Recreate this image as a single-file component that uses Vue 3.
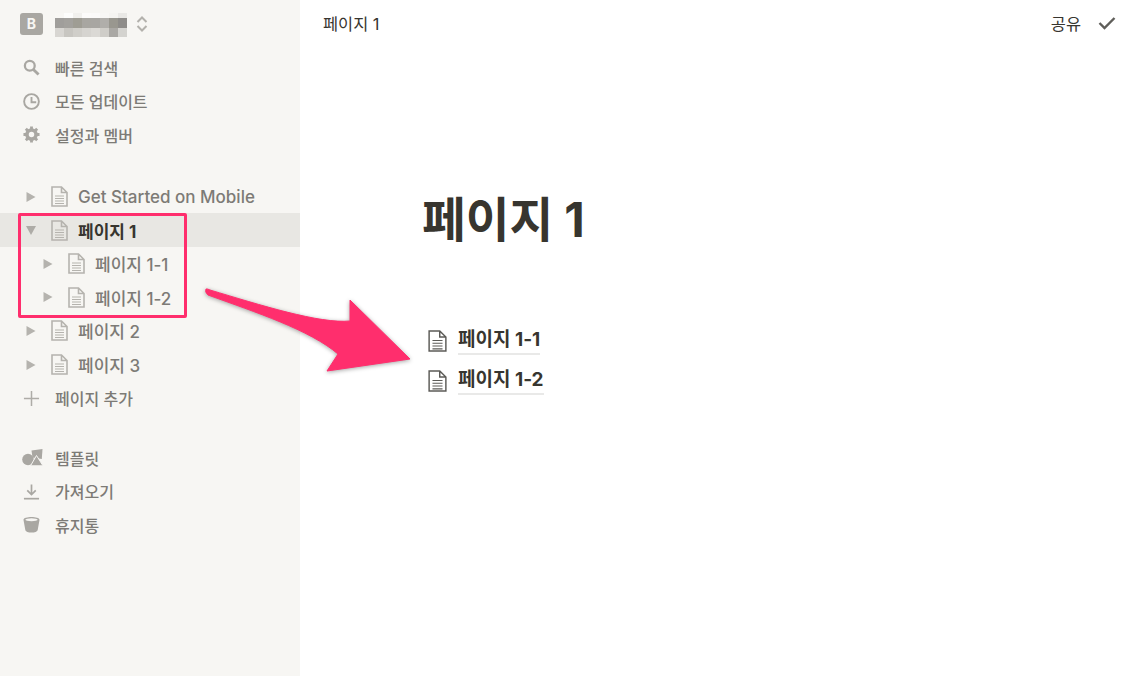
<script setup>
const blurRows = [
  ['#f8f7f4', '#fdfdfc', '#f1f0ed', '#fcfbfa', '#fbfaf9', '#f8f7f5', '#f5f4f1', '#e9e8e5'],
  ['#a09e9b', '#a3a19d', '#9f9d94', '#a8a6a1', '#a8a6a2', '#b0aeaa', '#99978f', '#8e8c89'],
  ['#d8d6d2', '#c8c6c1', '#d0cec9', '#d6d4d0', '#dbd9d5', '#cfcdc8', '#aaa8a4', '#d4d3cf']
]

const navTop = [
  { label: '빠른 검색', icon: 'search' },
  { label: '모든 업데이트', icon: 'clock' },
  { label: '설정과 멤버', icon: 'gear' }
]

const pages = [
  { label: 'Get Started on Mobile' },
  { label: '페이지 1', open: true, active: true },
  { label: '페이지 1-1', sub: true },
  { label: '페이지 1-2', sub: true },
  { label: '페이지 2' },
  { label: '페이지 3' }
]

const navBottom = [
  { label: '템플릿', icon: 'shapes' },
  { label: '가져오기', icon: 'import' },
  { label: '휴지통', icon: 'trash' }
]

const children = ['페이지 1-1', '페이지 1-2']
</script>

<template>
  <div class="app">
    <aside class="sidebar">
      <div class="workspace">
        <span class="badge">B</span>
        <div class="blur">
          <div class="blur-row" v-for="(row, r) in blurRows" :key="r">
            <i v-for="(c, i) in row" :key="i" :style="{ background: c }"></i>
          </div>
        </div>
        <svg class="updown" width="12" height="16" viewBox="0 0 12 16">
          <path d="M1.5 6 L6 1.5 L10.5 6 M1.5 10 L6 14.5 L10.5 10" fill="none" stroke="#b3b1ac" stroke-width="2" />
        </svg>
      </div>

      <div class="group">
        <div class="row nav" v-for="item in navTop" :key="item.label">
          <svg class="nav-icon" width="18" height="18" viewBox="0 0 18 18">
            <g v-if="item.icon === 'search'" fill="none" stroke="#a9a7a2">
              <circle cx="7.200" cy="7.200" r="5.200" stroke-width="2.400" />
              <path d="M11 11 L16.500 16.500" stroke-width="3" />
            </g>
            <g v-else-if="item.icon === 'clock'" fill="none" stroke="#a9a7a2" stroke-width="2">
              <circle cx="9" cy="9" r="7.800" />
              <path d="M9 4.200 V9.800 H14" />
            </g>
            <g v-else>
              <circle cx="9" cy="9" r="4.800" fill="none" stroke="#a9a7a2" stroke-width="3.800" />
              <path d="M9 0.500 V17.500 M0.500 9 H17.500 M3 3 L15 15 M15 3 L3 15" stroke="#a9a7a2" stroke-width="3" stroke-dasharray="3 11" />
            </g>
          </svg>
          <span>{{ item.label }}</span>
        </div>
      </div>

      <div class="group pages">
        <div
          class="row page"
          v-for="p in pages"
          :key="p.label"
          :class="{ active: p.active, sub: p.sub }"
        >
          <svg class="toggle" width="10" height="10" viewBox="0 0 10 10">
            <path v-if="p.open" d="M0 1 H10 L5 10 Z" fill="#aeaca7" />
            <path v-else d="M0.500 0 L9.500 5 L0.500 10 Z" fill="#b5b3ae" />
          </svg>
          <svg class="doc" width="17" height="21" viewBox="0 0 17 21">
            <path d="M1 1 H10.500 L16 6.500 V20 H1 Z M10.500 1 V6.500 H16" fill="none" stroke="#b5b3ae" stroke-width="1.600" />
            <path d="M4 10 H13 M4 12.500 H13 M4 15 H13 M4 17.500 H13" stroke="#b5b3ae" stroke-width="1.200" />
          </svg>
          <span>{{ p.label }}</span>
        </div>
        <div class="row nav add">
          <svg class="nav-icon" width="18" height="18" viewBox="0 0 18 18">
            <path d="M9 1 V17 M1 9 H17" stroke="#aeaca7" stroke-width="1.600" />
          </svg>
          <span>페이지 추가</span>
        </div>
      </div>

      <div class="group tools">
        <div class="row nav" v-for="item in navBottom" :key="item.label">
          <svg v-if="item.icon === 'shapes'" class="nav-icon wide" width="21" height="17" viewBox="0 0 21 17">
            <circle cx="6" cy="10.500" r="5.800" fill="#a9a7a2" />
            <path d="M9.500 1.500 L20.500 0 L19.800 10 L10.500 8.500 Z" fill="#a9a7a2" />
            <path d="M14.500 6.500 L21 16.800 H8.500 Z" fill="#a9a7a2" stroke="#f7f6f3" stroke-width="1" />
          </svg>
          <svg v-else class="nav-icon" width="18" height="18" viewBox="0 0 18 18">
            <g v-if="item.icon === 'import'" fill="none" stroke="#a9a7a2" stroke-width="1.800">
              <path d="M9 1.500 V12 M4.500 7.800 L9 12.300 L13.500 7.800" />
              <path d="M1 16.600 H17" />
            </g>
            <g v-else fill="#a9a7a2">
              <path d="M0.500 4 C0.500 0 17.500 0 17.500 4 L15.600 14.500 C15 18.500 3 18.500 2.400 14.500 Z" />
              <ellipse cx="9" cy="4" rx="6.500" ry="1.600" fill="#f7f6f3" />
            </g>
          </svg>
          <span>{{ item.label }}</span>
        </div>
      </div>
    </aside>

    <main class="main">
      <header class="topbar">
        <span class="crumb">페이지 1</span>
        <div class="actions">
          <span>공유</span>
          <svg width="18" height="14" viewBox="0 0 18 14">
            <path d="M1.500 7 L6.500 12 L16.500 2" fill="none" stroke="#5f5e5a" stroke-width="2.400" />
          </svg>
        </div>
      </header>

      <div class="content">
        <h1>페이지 1</h1>
        <div class="links">
          <div class="link" v-for="c in children" :key="c">
            <svg width="19" height="24" viewBox="0 0 17 20">
              <path d="M1 1 H10.500 L16 6.500 V19 H1 Z M10.500 1 V6.500 H16" fill="none" stroke="#5c5b57" stroke-width="1.300" />
              <path d="M4 9.500 H13 M4 12 H13 M4 14.500 H13 M4 17 H13" stroke="#5c5b57" stroke-width="1" />
            </svg>
            <span>{{ c }}</span>
          </div>
        </div>
      </div>
    </main>

    <div class="highlight"></div>
    <svg class="arrow" width="1123" height="676" viewBox="0 0 1123 676">
      <path
        d="M206 289 Q204.500 292 208 295 C255 312 310 330 338 354 L327 371 L410 359 L350 300 L350 321 C320 324 260 305 210 290 Q207 288.500 206 289 Z"
        fill="#ff2e6d"
        stroke="#ff2e6d"
        stroke-width="1"
        stroke-linejoin="round"
      />
    </svg>
  </div>
</template>

<style>
html, body {
  background: #fff;
}
</style>

<style scoped>
.app {
  position: relative;
  display: flex;
  width: 1123px;
  height: 676px;
  overflow: hidden;
  font-family: Inter, "Noto Sans CJK KR", sans-serif;
  color: #37352f;
}

.sidebar {
  width: 300px;
  flex-shrink: 0;
  background: #f7f6f3;
  color: #7d7b76;
  font-size: 16px;
  font-weight: 500;
}

.workspace {
  display: flex;
  align-items: center;
  height: 51px;
  padding-left: 20px;
  padding-bottom: 3px;
  box-sizing: border-box;
}

.badge {
  width: 23px;
  height: 22px;
  border-radius: 3px;
  background: #a9a7a2;
  color: #f7f6f3;
  font-size: 14px;
  font-weight: 700;
  line-height: 22px;
  text-align: center;
  margin-right: 12px;
}

.blur {
  width: 72px;
  margin-right: 9px;
  margin-top: 2px;
}

.blur-row {
  display: flex;
  height: 5px;
}

.blur-row + .blur-row {
  height: 9.500px;
}

.blur-row i {
  flex: 1;
}

.updown {
  display: block;
}

.group {
  display: flex;
  flex-direction: column;
}

.pages {
  margin-top: 28px;
}

.tools {
  margin-top: 26px;
}

.row {
  display: flex;
  align-items: center;
  height: 33.600px;
  flex-shrink: 0;
}

.nav {
  padding-left: 23px;
}

.nav-icon {
  width: 17px;
  height: 17px;
  margin-right: 15px;
  flex-shrink: 0;
}

.nav-icon.wide {
  width: 21px;
  height: 17px;
  margin-left: -1px;
  margin-right: 12px;
}

.page {
  padding-left: 26px;
  font-size: 17px;
}

.page.sub {
  padding-left: 43px;
}

.page.active {
  background: #e8e7e3;
  color: #37352f;
  font-weight: 700;
}

.toggle {
  margin-right: 15px;
  flex-shrink: 0;
}

.doc {
  margin-right: 10px;
  flex-shrink: 0;
}

.main {
  flex: 1;
  display: flex;
  flex-direction: column;
}

.topbar {
  display: flex;
  align-items: center;
  justify-content: space-between;
  height: 46px;
  padding: 0 7px 0 23px;
  font-size: 16.400px;
}

.actions {
  display: flex;
  align-items: center;
  gap: 17px;
}

.content {
  padding-left: 122px;
}

h1 {
  margin: 136px 0 0;
  font-size: 47.500px;
  font-weight: 700;
  line-height: 76px;
}

.links {
  margin-top: 69px;
  display: flex;
  flex-direction: column;
  gap: 12px;
}

.link {
  display: flex;
  align-items: center;
  height: 28px;
  padding-left: 6px;
  font-size: 19px;
  font-weight: 700;
}

.link span {
  margin-left: 11px;
  border-bottom: 2px solid #e9e9e8;
  line-height: 26px;
}

.highlight {
  position: absolute;
  left: 18px;
  top: 213px;
  width: 163px;
  height: 99px;
  border: 3px solid #ff2e6d;
  border-radius: 2px;
}

.arrow {
  position: absolute;
  left: 0;
  top: 0;
  filter: drop-shadow(0 1px 2px rgba(0, 0, 0, 0.35));
  pointer-events: none;
}
</style>
